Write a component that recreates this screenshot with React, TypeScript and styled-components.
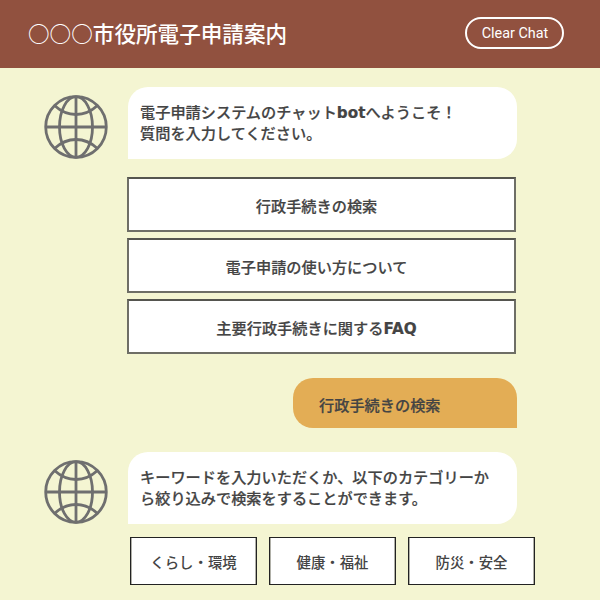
import React from "react";
import styled, { createGlobalStyle } from "styled-components";

const FONT = `"Noto Sans CJK JP", sans-serif`;

const menuItems = ["行政手続きの検索", "電子申請の使い方について", "主要行政手続きに関する"];
const categories = ["くらし・環境", "健康・福祉", "防災・安全"];

const Globe = () => (
  <GlobeSvg viewBox="0 0 64 64" fill="none" stroke="#6f6f6f" strokeWidth="2.8">
    <circle cx="32" cy="32" r="30.3" />
    <ellipse cx="32" cy="32" rx="16.5" ry="30.3" />
    <path d="M32 1.500v61M1.500 32h61" />
    <path d="M10.500 10.500C17 16.500 24 19.500 32 19.500s15-3 21.500-9" />
    <path d="M10.500 53.500C17 47.500 24 44.500 32 44.500s15 3 21.500 9" />
  </GlobeSvg>
);

export default function App() {
  return (
    <Page>
      <GlobalStyle />
      <Header>
        <Title>○○○市役所電子申請案内</Title>
        <ClearButton>Clear Chat</ClearButton>
      </Header>
      <Chat>
        <BotRow>
          <Globe />
          <BotBubble>
            電子申請システムのチャット<Latin>bot</Latin>へようこそ！
            <br />
            質問を入力してください。
          </BotBubble>
        </BotRow>
        <Menu>
          {menuItems.map((item, i) => (
            <MenuButton key={item}>
              {item}
              {i === 2 && <Latin>FAQ</Latin>}
            </MenuButton>
          ))}
        </Menu>
        <UserRow>
          <UserBubble>行政手続きの検索</UserBubble>
        </UserRow>
        <BotRow>
          <Globe />
          <BotBubble>
            キーワードを入力いただくか、以下のカテゴリーか
            <br />
            ら絞り込みで検索をすることができます。
          </BotBubble>
        </BotRow>
        <Categories>
          {categories.map((item) => (
            <CategoryButton key={item}>{item}</CategoryButton>
          ))}
        </Categories>
      </Chat>
    </Page>
  );
}

const GlobalStyle = createGlobalStyle`
  html, body {
    margin: 0;
    padding: 0;
    background-color: #f4f5d2;
  }
`;

const Page = styled.div`
  /* Size */
  width: 600px;
  height: 600px;
  /* Color */
  background-color: #f4f5d2;
  color: #444444;
  /* Other */
  font-family: ${FONT};
  overflow: hidden;
`;

const Latin = styled.span`
  font-family: "DejaVu Sans", sans-serif;
  font-weight: 700;
  line-height: 1;
`;

const Header = styled.header`
  /* Layout */
  display: flex;
  align-items: center;
  justify-content: space-between;
  /* Size */
  box-sizing: border-box;
  height: 68px;
  padding: 0 36px 2px 28px;
  /* Color */
  background-color: #91513f;
`;

const Title = styled.h1`
  margin: 0;
  font-size: 21.6px;
  font-weight: 500;
  line-height: 30px;
  color: #ffffff;
`;

const ClearButton = styled.button`
  /* Size */
  box-sizing: border-box;
  width: 99px;
  height: 32px;
  padding: 1px 0 0 1px;
  /* Color */
  background: transparent;
  border: 2px solid #ffffff;
  border-radius: 16px;
  color: #ffffff;
  /* Other */
  font-family: Roboto, sans-serif;
  font-size: 14.4px;
`;

const Chat = styled.main`
  /* Layout */
  display: flex;
  flex-direction: column;
  /* Size */
  padding: 19px 83px 0 44px;
`;

const BotRow = styled.div`
  /* Layout */
  display: flex;
  align-items: flex-end;
  gap: 20px;
`;

const GlobeSvg = styled.svg`
  flex-shrink: 0;
  width: 64px;
  height: 64px;
`;

const BotBubble = styled.div`
  /* Size */
  box-sizing: border-box;
  width: 389px;
  height: 72px;
  padding: 14px 12px;
  /* Color */
  background-color: #ffffff;
  border-radius: 20px 20px 20px 0;
  /* Text */
  font-size: 15.2px;
  font-weight: 500;
  line-height: 21px;
  -webkit-text-stroke: 0.2px #444444;
  white-space: nowrap;
`;

const Menu = styled.div`
  /* Layout */
  display: flex;
  flex-direction: column;
  gap: 6px;
  /* Size */
  margin: 18px 0 0 83px;
`;

const MenuButton = styled.button`
  /* Size */
  box-sizing: border-box;
  width: 389px;
  height: 55px;
  padding: 0 10px 0 0;
  /* Color */
  background-color: #ffffff;
  border: 2px solid #6e6e66;
  border-top-color: #55554f;
  color: #444444;
  /* Text */
  font-family: ${FONT};
  font-size: 15.2px;
  font-weight: 500;
  -webkit-text-stroke: 0.2px #444444;
`;

const UserRow = styled.div`
  /* Layout */
  display: flex;
  justify-content: flex-end;
  /* Size */
  margin-top: 24px;
  margin-bottom: 24px;
`;

const UserBubble = styled.div`
  /* Size */
  box-sizing: border-box;
  width: 224px;
  height: 50px;
  padding: 0 26px;
  /* Color */
  background-color: #e3ad55;
  border-radius: 20px 20px 0 20px;
  /* Text */
  font-size: 15.2px;
  font-weight: 500;
  line-height: 53px;
  -webkit-text-stroke: 0.2px #444444;
`;

const Categories = styled.div`
  /* Layout */
  display: flex;
  gap: 12px;
  /* Size */
  margin: 13px 0 0 86px;
  width: 405px;
`;

const CategoryButton = styled.button`
  /* Size */
  box-sizing: border-box;
  flex: 0 0 127px;
  height: 48px;
  padding: 1px 0 0;
  /* Color */
  background-color: #ffffff;
  border: 1px solid #222222;
  box-shadow: inset 1px 0 0 #b0b0a8, inset -1px 0 0 #b0b0a8;
  color: #444444;
  /* Text */
  font-family: ${FONT};
  font-size: 14.4px;
  font-weight: 500;
`;
